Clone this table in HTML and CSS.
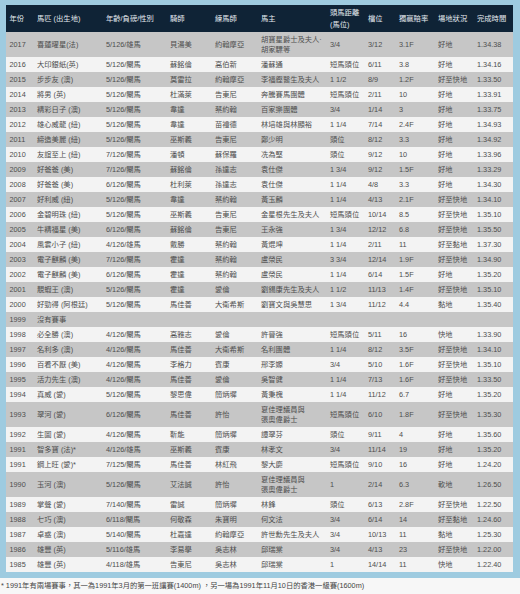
FILE: index.html
```html
<!DOCTYPE html>
<html lang="zh-Hant">
<head>
<meta charset="utf-8">
<title>董事盃歷屆冠軍</title>
<link rel="stylesheet" href="styles.css">
</head>
<body>
<div class="frame">
<table class="results">
<colgroup>
<col class="c-year"><col class="c-horse"><col class="c-age"><col class="c-jockey"><col class="c-trainer"><col class="c-owner"><col class="c-margin"><col class="c-draw"><col class="c-odds"><col class="c-going"><col class="c-time">
</colgroup>
<thead>
<tr><th>年份</th><th>馬匹 (出生地)</th><th>年齡/負磅/性別</th><th>騎師</th><th>練馬師</th><th>馬主</th><th>頭馬距離<br>(馬位)</th><th>檔位</th><th>獨贏賠率</th><th>場地狀況</th><th>完成時間</th></tr>
</thead>
<tbody>
<tr><td>2017</td><td>喜蓮曜星(法)</td><td>5/126/雄馬</td><td>貝湯美</td><td>約翰摩亞</td><td>胡寶星爵士及夫人·<br>胡家驃等</td><td>3/4</td><td>3/12</td><td>3.1F</td><td>好地</td><td>1.34.38</td></tr>
<tr><td>2016</td><td>大印銀紙(英)</td><td>5/126/閹馬</td><td>蘇銘倫</td><td>高伯新</td><td>潘蘇通</td><td>短馬頭位</td><td>6/11</td><td>3.8</td><td>好地</td><td>1.34.16</td></tr>
<tr><td>2015</td><td>步步友 (澳)</td><td>5/126/閹馬</td><td>莫雷拉</td><td>約翰摩亞</td><td>李福鏗醫生及夫人</td><td>1 1/2</td><td>8/9</td><td>1.2F</td><td>好至快地</td><td>1.33.50</td></tr>
<tr><td>2014</td><td>將男 (英)</td><td>5/126/閹馬</td><td>杜滿萊</td><td>告東尼</td><td>奔騰賽馬團體</td><td>短馬頭位</td><td>2/11</td><td>10</td><td>好地</td><td>1.33.91</td></tr>
<tr><td>2013</td><td>精彩日子 (澳)</td><td>5/126/閹馬</td><td>韋達</td><td>蔡約翰</td><td>百家樂團體</td><td>3/4</td><td>1/14</td><td>3</td><td>好地</td><td>1.33.75</td></tr>
<tr><td>2012</td><td>雄心威龍 (紐)</td><td>5/126/閹馬</td><td>韋達</td><td>苗禮德</td><td>林培雄與林顯裕</td><td>1 1/4</td><td>7/14</td><td>2.4F</td><td>好地</td><td>1.34.93</td></tr>
<tr><td>2011</td><td>締造美麗 (紐)</td><td>5/126/閹馬</td><td>巫斯義</td><td>告東尼</td><td>鄭少明</td><td>頭位</td><td>8/12</td><td>3.3</td><td>好地</td><td>1.34.92</td></tr>
<tr><td>2010</td><td>友誼至上 (紐)</td><td>7/126/閹馬</td><td>潘頓</td><td>蘇保羅</td><td>冼為堅</td><td>頭位</td><td>9/12</td><td>10</td><td>好地</td><td>1.33.96</td></tr>
<tr><td>2009</td><td>好爸爸 (美)</td><td>7/126/閹馬</td><td>蘇銘倫</td><td>孫達志</td><td>袁仕傑</td><td>1 3/4</td><td>9/12</td><td>1.5F</td><td>好地</td><td>1.33.29</td></tr>
<tr><td>2008</td><td>好爸爸 (美)</td><td>6/126/閹馬</td><td>杜利萊</td><td>孫達志</td><td>袁仕傑</td><td>1 1/4</td><td>4/8</td><td>3.3</td><td>好地</td><td>1.34.30</td></tr>
<tr><td>2007</td><td>好利威 (紐)</td><td>5/126/閹馬</td><td>韋達</td><td>蔡約翰</td><td>黃玉麟</td><td>1 1/4</td><td>4/13</td><td>2.1F</td><td>好至快地</td><td>1.34.10</td></tr>
<tr><td>2006</td><td>金碧明珠 (紐)</td><td>5/126/閹馬</td><td>巫斯義</td><td>告東尼</td><td>金星根先生及夫人</td><td>短馬頭位</td><td>10/14</td><td>8.5</td><td>好至快地</td><td>1.35.10</td></tr>
<tr><td>2005</td><td>牛精福星 (美)</td><td>6/126/閹馬</td><td>蘇銘倫</td><td>告東尼</td><td>王永強</td><td>1 3/4</td><td>12/12</td><td>6.8</td><td>好至快地</td><td>1.35.50</td></tr>
<tr><td>2004</td><td>風雲小子 (紐)</td><td>4/126/雄馬</td><td>戴勝</td><td>蔡約翰</td><td>黃焜坤</td><td>1 1/4</td><td>2/11</td><td>11</td><td>好至黏地</td><td>1.37.30</td></tr>
<tr><td>2003</td><td>電子麒麟 (美)</td><td>7/126/閹馬</td><td>霍達</td><td>蔡約翰</td><td>盧榮民</td><td>3 3/4</td><td>12/14</td><td>1.9F</td><td>好至快地</td><td>1.34.90</td></tr>
<tr><td>2002</td><td>電子麒麟 (美)</td><td>6/126/閹馬</td><td>霍達</td><td>蔡約翰</td><td>盧榮民</td><td>1 1/4</td><td>6/14</td><td>1.5F</td><td>好地</td><td>1.35.20</td></tr>
<tr><td>2001</td><td>靚蝦王 (澳)</td><td>5/126/閹馬</td><td>霍達</td><td>愛倫</td><td>劉錫康先生及夫人</td><td>1 1/2</td><td>11/13</td><td>1.4F</td><td>好至快地</td><td>1.35.10</td></tr>
<tr><td>2000</td><td>好勁得 (阿根廷)</td><td>5/126/閹馬</td><td>馬佳善</td><td>大衛希斯</td><td>劉寶文與吳慧思</td><td>1 3/4</td><td>11/12</td><td>4.4</td><td>黏地</td><td>1.35.40</td></tr>
<tr><td>1999</td><td>沒有賽事</td><td></td><td></td><td></td><td></td><td></td><td></td><td></td><td></td><td></td></tr>
<tr><td>1998</td><td>必全勝 (澳)</td><td>4/126/閹馬</td><td>高雅志</td><td>愛倫</td><td>許晉強</td><td>短馬頭位</td><td>5/11</td><td>16</td><td>快地</td><td>1.33.90</td></tr>
<tr><td>1997</td><td>名利多 (澳)</td><td>4/126/閹馬</td><td>馬佳善</td><td>大衛希斯</td><td>名利團體</td><td>1 1/4</td><td>8/12</td><td>3.5F</td><td>好至快地</td><td>1.34.10</td></tr>
<tr><td>1996</td><td>百看不厭 (美)</td><td>4/126/閹馬</td><td>李格力</td><td>賓康</td><td>邢李嫄</td><td>3/4</td><td>5/10</td><td>1.6F</td><td>好至快地</td><td>1.35.10</td></tr>
<tr><td>1995</td><td>活力先生 (澳)</td><td>4/126/閹馬</td><td>馬佳善</td><td>愛倫</td><td>吳智健</td><td>1 1/4</td><td>7/13</td><td>1.6F</td><td>好至快地</td><td>1.33.50</td></tr>
<tr><td>1994</td><td>真威 (愛)</td><td>5/126/閹馬</td><td>黎思偉</td><td>簡炳墀</td><td>黃秉槐</td><td>1 1/4</td><td>11/12</td><td>6.7</td><td>好地</td><td>1.35.20</td></tr>
<tr><td>1993</td><td>翠河 (愛)</td><td>6/126/閹馬</td><td>馬佳善</td><td>許怡</td><td>夏佳理議員與<br>張奧偉爵士</td><td>短馬頭位</td><td>6/10</td><td>1.8F</td><td>好至快地</td><td>1.35.30</td></tr>
<tr><td>1992</td><td>生圖 (愛)</td><td>4/126/閹馬</td><td>靳能</td><td>簡炳墀</td><td>譚翠芬</td><td>頭位</td><td>9/11</td><td>4</td><td>好地</td><td>1.35.60</td></tr>
<tr><td>1991</td><td>智多寶 (法)*</td><td>4/126/雄馬</td><td>巫斯義</td><td>賓康</td><td>林孝文</td><td>3/4</td><td>11/14</td><td>19</td><td>好地</td><td>1.35.20</td></tr>
<tr><td>1991</td><td>鋼上旺 (愛)*</td><td>7/125/閹馬</td><td>馬佳善</td><td>林紅飛</td><td>黎大慶</td><td>短馬頭位</td><td>9/10</td><td>16</td><td>好地</td><td>1.24.20</td></tr>
<tr><td>1990</td><td>玉河 (澳)</td><td>5/126/閹馬</td><td>艾法誠</td><td>許怡</td><td>夏佳理議員與<br>張奧偉爵士</td><td>1</td><td>2/14</td><td>6.3</td><td>軟地</td><td>1.26.50</td></tr>
<tr><td>1989</td><td>掌聲 (愛)</td><td>7/140/閹馬</td><td>雷誠</td><td>簡炳墀</td><td>林鋒</td><td>頭位</td><td>6/13</td><td>2.8F</td><td>好至快地</td><td>1.22.50</td></tr>
<tr><td>1988</td><td>七巧 (澳)</td><td>6/118/閹馬</td><td>何敬森</td><td>朱寶明</td><td>何文法</td><td>3/4</td><td>6/14</td><td>14</td><td>好至黏地</td><td>1.24.60</td></tr>
<tr><td>1987</td><td>卓惑 (澳)</td><td>5/140/閹馬</td><td>杜嘉達</td><td>約翰摩亞</td><td>許世勳先生及夫人</td><td>3/4</td><td>10/13</td><td>11</td><td>黏地</td><td>1.25.30</td></tr>
<tr><td>1986</td><td>雄豐 (英)</td><td>5/116/雄馬</td><td>李易學</td><td>吳志林</td><td>邱瑞棠</td><td>3/4</td><td>4/13</td><td>23</td><td>好至快地</td><td>1.22.00</td></tr>
<tr><td>1985</td><td>雄豐 (英)</td><td>4/118/雄馬</td><td>告東尼</td><td>吳志林</td><td>邱瑞棠</td><td>1</td><td>14/14</td><td>11</td><td>快地</td><td>1.22.40</td></tr>
</tbody>
</table>
</div>
<p class="note">* 1991年有兩場賽事，其一為1991年3月的第一班讓賽(1400m) ，另一場為1991年11月10日的香港一級賽(1600m)</p>
</body>
</html>
```
FILE: styles.css
```css
html, body {
  margin: 0;
  padding: 0;
  background: #f7f7f7;
}
body {
  width: 520px;
  font-family: "Liberation Sans", "Noto Sans CJK TC", sans-serif;
  font-size: 7.3px;
  color: #4e4e4e;
}
.frame {
  background: #9ecbe0;
  padding: 5px 7px 6px 6px;
}
.results {
  width: 507px;
  table-layout: fixed;
  border-collapse: collapse;
  border-spacing: 0;
}
.c-year { width: 27.5px; }
.c-horse { width: 69px; }
.c-age { width: 64px; }
.c-jockey { width: 45px; }
.c-trainer { width: 46px; }
.c-owner { width: 69px; }
.c-margin { width: 38px; }
.c-draw { width: 31px; }
.c-odds { width: 39px; }
.c-going { width: 39px; }
.c-time { width: 39.5px; }
.results th {
  background: #0f2336;
  color: #e4eaf0;
  font-weight: normal;
  text-align: left;
  padding: 2px 0 2px 3.5px;
  line-height: 11.5px;
  height: 23px;
  vertical-align: middle;
  white-space: nowrap;
}
.results td {
  padding: 2.5px 0 2.5px 3.5px;
  line-height: 10px;
  vertical-align: middle;
  white-space: nowrap;
  overflow: visible;
}
.results tbody tr:nth-child(odd) td {
  background: #c6c6c6;
}
.results tbody tr:nth-child(even) td {
  background: #f3f3f3;
}
.note {
  margin: 0;
  padding: 0 0 0 1px;
  line-height: 16px;
  color: #444;
  white-space: nowrap;
}
```
